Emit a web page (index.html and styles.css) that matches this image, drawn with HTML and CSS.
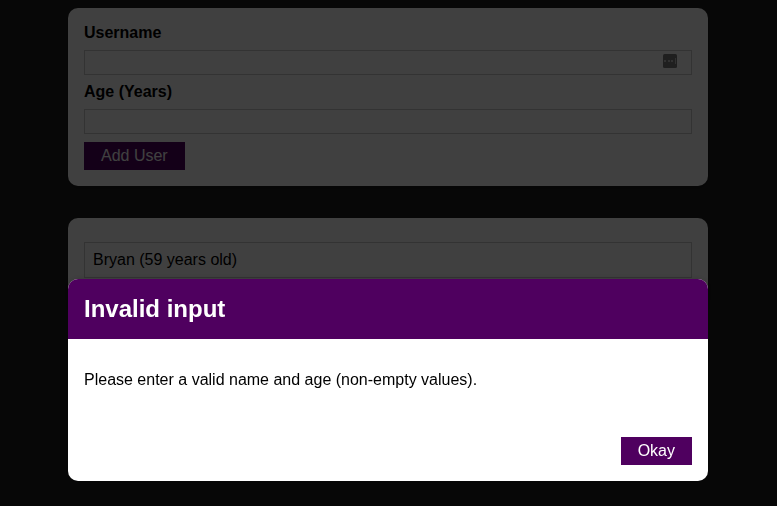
FILE: index.html
```
<!DOCTYPE html>
<html lang="en">
<head>
  <meta charset="utf-8">
  <title>Users</title>
  <link rel="stylesheet" href="styles.css">
</head>
<body>
  <main class="page">
    <section class="card form-card">
      <form class="form">
        <label class="label" for="username">Username</label>
        <div class="field">
          <input class="input" id="username" type="text">
          <svg class="autofill" width="14" height="14" viewBox="0 0 14 14" aria-hidden="true">
            <rect width="14" height="14" rx="1.5" fill="#7c7c7c"/>
            <path d="M1 6h2v2H1zM5 6h2v2H5zM8 6h2v2H8zM12 4h1v6h-1z" fill="#c4c4c4"/>
          </svg>
        </div>
        <label class="label" for="age">Age (Years)</label>
        <div class="field">
          <input class="input" id="age" type="text">
        </div>
        <button class="button" type="button">Add User</button>
      </form>
    </section>
    <section class="card list-card">
      <ul class="users">
        <li class="user">Bryan (59 years old)</li>
      </ul>
    </section>
  </main>
  <div class="backdrop"></div>
  <div class="modal" role="dialog" aria-labelledby="modal-title">
    <header class="modal-header">
      <h2 class="modal-title" id="modal-title">Invalid input</h2>
    </header>
    <div class="modal-content">
      <p class="message">Please enter a valid name and age (non-empty values).</p>
    </div>
    <footer class="modal-actions">
      <button class="button" type="button">Okay</button>
    </footer>
  </div>
</body>
</html>
```
FILE: styles.css
```
* {
  box-sizing: border-box;
}

html {
  background: #1f1f1f;
  overflow: hidden;
}

body {
  margin: 0;
  font: 16px/18px "Liberation Sans", Arial, sans-serif;
  color: #000;
}

.page {
  width: 776px;
  padding-top: 8px;
}

.card {
  width: 640px;
  margin: 0 auto 32px;
  padding: 16px;
  border-radius: 10px;
  background: #fff;
  box-shadow: 0 2px 8px rgba(0, 0, 0, 0.26);
}

.label {
  display: block;
  margin-bottom: 8px;
  font-weight: bold;
}

.field {
  position: relative;
  height: 25px;
  margin-bottom: 8px;
}

.input {
  display: block;
  width: 100%;
  height: 25px;
  padding: 2px;
  border: 1px solid #ccc;
  border-radius: 0;
  background: #fff;
  font: inherit;
}

.autofill {
  position: absolute;
  top: 4px;
  right: 15px;
}

.button {
  display: block;
  height: 28px;
  padding: 4px 16px;
  border: 1px solid #4f005f;
  border-radius: 0;
  background: #4f005f;
  color: #fff;
  font: inherit;
}

.users {
  margin: 0;
  padding: 8px 0;
  list-style: none;
}

.user {
  height: 36px;
  padding: 8px;
  border: 1px solid #ccc;
}

.backdrop {
  position: fixed;
  inset: 0;
  background: rgba(0, 0, 0, 0.75);
}

.modal {
  position: fixed;
  top: 279px;
  left: 68px;
  width: 640px;
  height: 202px;
  display: flex;
  flex-direction: column;
  overflow: hidden;
  border-radius: 10px;
  background: #fff;
  box-shadow: 0 2px 8px rgba(0, 0, 0, 0.26);
}

.modal-header {
  height: 60px;
  padding: 16px;
  background: #4f005f;
}

.modal-title {
  margin: 0;
  color: #fff;
  font-size: 24px;
  line-height: 28px;
}

.modal-content {
  flex: 1;
  padding: 32px 16px;
}

.message {
  margin: 0;
}

.modal-actions {
  display: flex;
  justify-content: flex-end;
  padding: 0 16px 16px;
}
```
